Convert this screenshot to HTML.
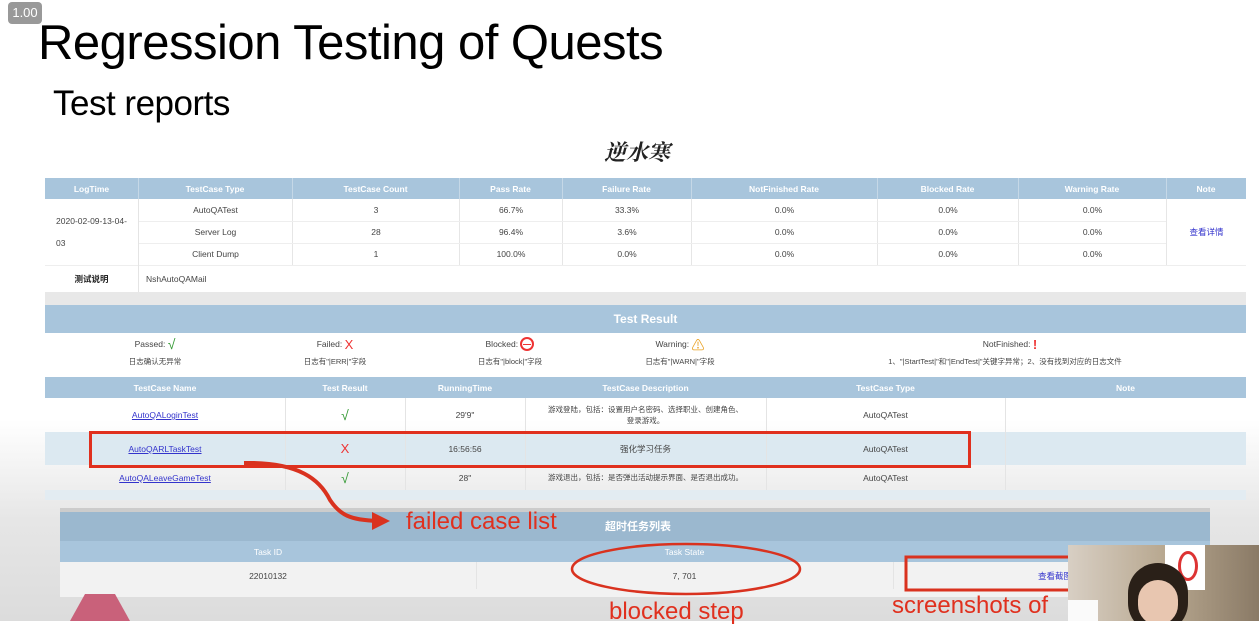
<!DOCTYPE html>
<html><head><meta charset="utf-8"><style>
body{margin:0;width:1259px;height:621px;overflow:hidden;position:relative;font-family:"Liberation Sans","Noto Sans CJK SC",sans-serif;background:linear-gradient(#fff 0,#fff 420px,#e6e6e6 520px,#dcdcdc 621px)}
.a{position:absolute}
.h{background:#a8c5dc;color:#fff;font-weight:bold;font-size:9px;text-align:center}
.cell{position:absolute;display:flex;align-items:center;justify-content:center;font-size:8.5px;color:#444;box-sizing:border-box}
.v{position:absolute;width:1px;background:#e4e4e4}
.row{position:absolute;left:138px;width:1028px;height:22px;display:flex}
.row div{display:flex;align-items:center;justify-content:center;font-size:8.5px;color:#444;border-left:1px solid #e6e6e6;box-sizing:border-box}
</style></head><body>
<div class="a" style="left:8px;top:2px;width:34px;height:22px;background:#999;border-radius:4px;color:#fff;font-size:13px;line-height:22px;text-align:center">1.00</div>
<div class="a" style="left:38px;top:15px;font-size:49px;color:#000;letter-spacing:-0.5px">Regression Testing of Quests</div>
<div class="a" style="left:53px;top:84px;font-size:35px;color:#000;letter-spacing:-0.5px">Test reports</div>
<div class="a" style="left:604px;top:136px;font-size:22px;font-weight:bold;color:#222;font-family:'Noto Serif CJK SC',serif;font-style:italic">逆水寒</div>

<!-- table1 -->
<div class="a h" style="left:45px;top:178px;width:1201px;height:21px"></div>
<div class="cell" style="left:45px;top:178px;width:93px;height:21px;color:#fff;font-weight:bold">LogTime</div>
<div class="cell" style="left:138px;top:178px;width:154px;height:21px;color:#fff;font-weight:bold">TestCase Type</div>
<div class="cell" style="left:292px;top:178px;width:167px;height:21px;color:#fff;font-weight:bold">TestCase Count</div>
<div class="cell" style="left:459px;top:178px;width:103px;height:21px;color:#fff;font-weight:bold">Pass Rate</div>
<div class="cell" style="left:562px;top:178px;width:129px;height:21px;color:#fff;font-weight:bold">Failure Rate</div>
<div class="cell" style="left:691px;top:178px;width:186px;height:21px;color:#fff;font-weight:bold">NotFinished Rate</div>
<div class="cell" style="left:877px;top:178px;width:141px;height:21px;color:#fff;font-weight:bold">Blocked Rate</div>
<div class="cell" style="left:1018px;top:178px;width:148px;height:21px;color:#fff;font-weight:bold">Warning Rate</div>
<div class="cell" style="left:1166px;top:178px;width:80px;height:21px;color:#fff;font-weight:bold">Note</div>
<div class="v" style="left:138px;top:178px;height:21px;background:#c5d8e7"></div>
<div class="v" style="left:292px;top:178px;height:21px;background:#c5d8e7"></div>
<div class="v" style="left:459px;top:178px;height:21px;background:#c5d8e7"></div>
<div class="v" style="left:562px;top:178px;height:21px;background:#c5d8e7"></div>
<div class="v" style="left:691px;top:178px;height:21px;background:#c5d8e7"></div>
<div class="v" style="left:877px;top:178px;height:21px;background:#c5d8e7"></div>
<div class="v" style="left:1018px;top:178px;height:21px;background:#c5d8e7"></div>
<div class="v" style="left:1166px;top:178px;height:21px;background:#c5d8e7"></div>
<div class="cell" style="left:45px;top:199px;width:93px;height:66px;line-height:22px;flex-direction:column">2020-02-09-13-04-<br>03</div>
<div class="cell" style="left:1166px;top:199px;width:80px;height:66px;color:#33c;border-left:1px solid #e6e6e6">查看详情</div>
<div class="row" style="top:199px"><div style="width:154px">AutoQATest</div><div style="width:167px">3</div><div style="width:103px">66.7%</div><div style="width:129px">33.3%</div><div style="width:186px">0.0%</div><div style="width:141px">0.0%</div><div style="width:148px">0.0%</div></div>
<div class="row" style="top:221px"><div style="width:154px">Server Log</div><div style="width:167px">28</div><div style="width:103px">96.4%</div><div style="width:129px">3.6%</div><div style="width:186px">0.0%</div><div style="width:141px">0.0%</div><div style="width:148px">0.0%</div></div>
<div class="row" style="top:243px"><div style="width:154px">Client Dump</div><div style="width:167px">1</div><div style="width:103px">100.0%</div><div style="width:129px">0.0%</div><div style="width:186px">0.0%</div><div style="width:141px">0.0%</div><div style="width:148px">0.0%</div></div>
<div class="a" style="left:138px;top:221px;width:1028px;height:1px;background:#eee"></div>
<div class="a" style="left:138px;top:243px;width:1028px;height:1px;background:#eee"></div>
<div class="a" style="left:45px;top:265px;width:1201px;height:1px;background:#eee"></div>
<div class="v" style="left:138px;top:199px;height:93px"></div>
<div class="cell" style="left:45px;top:265px;width:93px;height:27px;font-weight:bold;color:#222">测试说明</div>
<div class="cell" style="left:146px;top:265px;width:200px;height:27px;justify-content:flex-start">NshAutoQAMail</div>
<div class="a" style="left:45px;top:292px;width:1201px;height:13px;background:#e8e8e8"></div>
<div class="a h" style="left:45px;top:305px;width:1201px;height:28px;line-height:28px;font-size:12px">Test Result</div>

<!-- legend -->
<div class="cell" style="left:60px;top:337px;width:190px;height:14px">Passed:&nbsp;<span style="color:#393;font-size:14px">√</span></div>
<div class="cell" style="left:60px;top:355px;width:190px;height:12px;font-size:7.5px">日志确认无异常</div>
<div class="cell" style="left:240px;top:337px;width:190px;height:14px">Failed:&nbsp;<span style="color:#e33;font-size:13px">X</span></div>
<div class="cell" style="left:240px;top:355px;width:190px;height:12px;font-size:7.5px">日志有"|ERR|"字段</div>
<div class="cell" style="left:415px;top:337px;width:190px;height:14px">Blocked:&nbsp;<span style="display:inline-block;width:14px;height:14px;border:2px solid #e33;border-radius:50%;position:relative;box-sizing:border-box"><span style="position:absolute;left:1px;right:1px;top:4.5px;height:1.5px;background:#e33"></span></span></div>
<div class="cell" style="left:415px;top:355px;width:190px;height:12px;font-size:7.5px">日志有"|block|"字段</div>
<div class="cell" style="left:585px;top:337px;width:190px;height:14px">Warning:&nbsp;<span style="color:#e9a020;font-size:13px">⚠</span></div>
<div class="cell" style="left:585px;top:355px;width:190px;height:12px;font-size:7.5px">日志有"|WARN|"字段</div>
<div class="cell" style="left:850px;top:337px;width:320px;height:14px">NotFinished:&nbsp;<span style="color:#e33;font-weight:bold;font-size:13px">!</span></div>
<div class="cell" style="left:810px;top:355px;width:390px;height:12px;font-size:7.5px">1、"|StartTest|"和"|EndTest|"关键字异常；2、没有找到对应的日志文件</div>

<!-- table2 -->
<div class="a h" style="left:45px;top:377px;width:1201px;height:21px"></div>
<div class="a" style="left:45px;top:432px;width:1201px;height:33px;background:#dce9f1"></div>
<div class="a" style="left:45px;top:490px;width:1201px;height:10px;background:#e3ecf2"></div>
<div class="cell" style="left:45px;top:377px;width:240px;height:21px;color:#fff;font-weight:bold">TestCase Name</div>
<div class="cell" style="left:285px;top:377px;width:120px;height:21px;color:#fff;font-weight:bold">Test Result</div>
<div class="cell" style="left:405px;top:377px;width:120px;height:21px;color:#fff;font-weight:bold">RunningTime</div>
<div class="cell" style="left:525px;top:377px;width:241px;height:21px;color:#fff;font-weight:bold">TestCase Description</div>
<div class="cell" style="left:766px;top:377px;width:239px;height:21px;color:#fff;font-weight:bold">TestCase Type</div>
<div class="cell" style="left:1005px;top:377px;width:241px;height:21px;color:#fff;font-weight:bold">Note</div>

<div class="cell" style="left:45px;top:398px;width:240px;height:34px;color:#33c;text-decoration:underline">AutoQALoginTest</div>
<div class="cell" style="left:285px;top:398px;width:120px;height:34px;color:#393;font-size:14px">√</div>
<div class="cell" style="left:405px;top:398px;width:120px;height:34px">29'9"</div>
<div class="cell" style="left:525px;top:398px;width:241px;height:34px;font-size:7.5px;text-align:center">游戏登陆，包括：设置用户名密码、选择职业、创建角色、<br>登录游戏。</div>
<div class="cell" style="left:766px;top:398px;width:239px;height:34px">AutoQATest</div>

<div class="cell" style="left:45px;top:432px;width:240px;height:33px;color:#33c;text-decoration:underline">AutoQARLTaskTest</div>
<div class="cell" style="left:285px;top:432px;width:120px;height:33px;color:#e33;font-size:13px">X</div>
<div class="cell" style="left:405px;top:432px;width:120px;height:33px">16:56:56</div>
<div class="cell" style="left:525px;top:432px;width:241px;height:33px">强化学习任务</div>
<div class="cell" style="left:766px;top:432px;width:239px;height:33px">AutoQATest</div>

<div class="cell" style="left:45px;top:465px;width:240px;height:25px;color:#33c;text-decoration:underline">AutoQALeaveGameTest</div>
<div class="cell" style="left:285px;top:465px;width:120px;height:25px;color:#393;font-size:14px">√</div>
<div class="cell" style="left:405px;top:465px;width:120px;height:25px">28"</div>
<div class="cell" style="left:525px;top:465px;width:241px;height:25px;font-size:7.5px">游戏退出，包括：是否弹出活动提示界面、是否退出成功。</div>
<div class="cell" style="left:766px;top:465px;width:239px;height:25px">AutoQATest</div>
<div class="v" style="left:285px;top:398px;height:92px"></div>
<div class="v" style="left:405px;top:398px;height:92px"></div>
<div class="v" style="left:525px;top:398px;height:92px"></div>
<div class="v" style="left:766px;top:398px;height:92px"></div>
<div class="v" style="left:1005px;top:398px;height:92px"></div>

<div class="a" style="left:89px;top:431px;width:876px;height:31px;border:3px solid #e0301e"></div>

<!-- bottom panel -->
<div class="a" style="left:60px;top:508px;width:1150px;height:85px;background:#f2f2f2;border-top:4px solid #ccc"></div>
<div class="a" style="left:60px;top:512px;width:1150px;height:29px;background:#9bb8cf"></div>
<div class="a" style="left:605px;top:518px;font-size:11px;color:#fff;font-weight:bold">超时任务列表</div>
<div class="a" style="left:60px;top:541px;width:1150px;height:21px;background:#a8c5dc"></div>
<div class="cell" style="left:60px;top:541px;width:416px;height:21px;color:#fff">Task ID</div>
<div class="cell" style="left:476px;top:541px;width:417px;height:21px;color:#fff">Task State</div>
<div class="cell" style="left:60px;top:562px;width:416px;height:27px">22010132</div>
<div class="cell" style="left:476px;top:562px;width:417px;height:27px">7, 701</div>
<div class="cell" style="left:1030px;top:562px;width:50px;height:27px;color:#33c">查看截图</div>
<div class="v" style="left:476px;top:562px;height:27px"></div>
<div class="v" style="left:893px;top:562px;height:27px"></div>

<svg class="a" style="left:0;top:0" width="1259" height="621">
<path d="M244 463 C300 462 320 480 330 500 C340 515 350 520 378 521" fill="none" stroke="#d9321f" stroke-width="4"/>
<path d="M372 512 L390 521 L372 530 Z" fill="#d9321f"/>
<ellipse cx="686" cy="569" rx="114" ry="25" fill="none" stroke="#d9321f" stroke-width="2.5"/>
<rect x="906" y="557" width="172" height="33" fill="none" stroke="#d9321f" stroke-width="3"/>
<path d="M70 621 L85 594 L115 594 L130 621 Z" fill="#c9617a"/>
</svg>
<div class="a" style="left:406px;top:508px;font-size:24px;color:#e0301e">failed case list</div>
<div class="a" style="left:609px;top:598px;font-size:24px;color:#e0301e">blocked step</div>
<div class="a" style="left:892px;top:592px;font-size:24px;color:#e0301e">screenshots of</div>

<div class="a" style="left:1068px;top:545px;width:191px;height:76px;background:linear-gradient(90deg,#d8cfc4,#b8a890 50%,#8a7a66);overflow:hidden">
<div class="a" style="left:97px;top:0;width:40px;height:45px;background:#fff"></div>
<div class="a" style="left:110px;top:6px;width:14px;height:24px;border:3px solid #d33;border-radius:50%"></div>
<div class="a" style="left:60px;top:18px;width:60px;height:70px;background:#2a2018;border-radius:30px"></div>
<div class="a" style="left:70px;top:35px;width:40px;height:45px;background:#e8c6b0;border-radius:20px"></div>
<div class="a" style="left:0;top:55px;width:30px;height:21px;background:#fafafa"></div>
</div>
</body></html>
